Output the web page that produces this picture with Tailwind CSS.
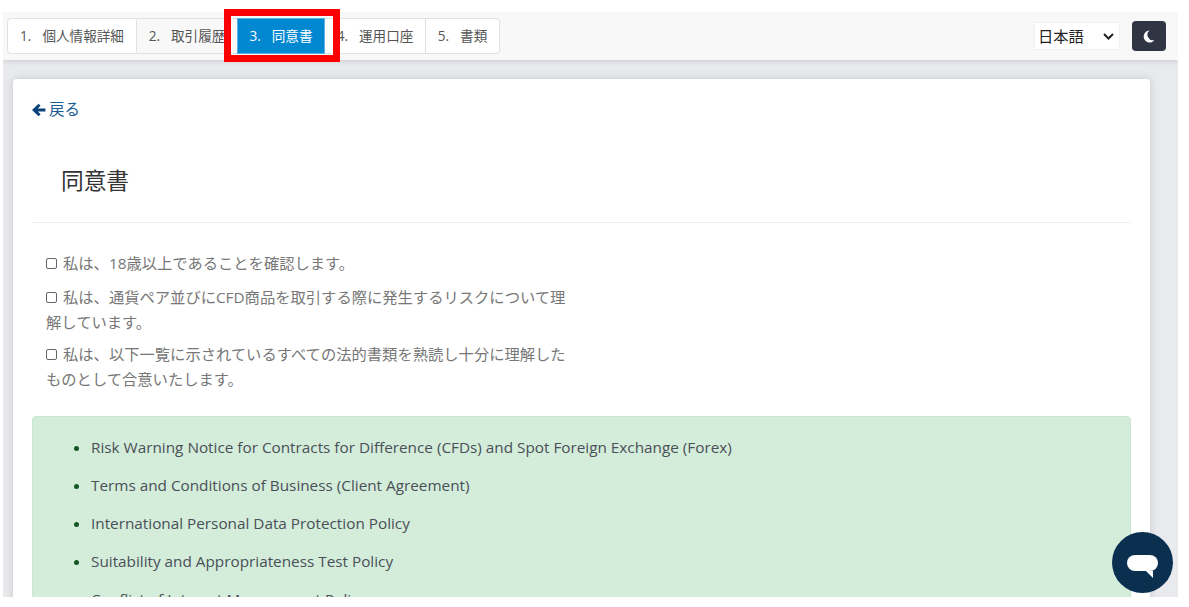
<!DOCTYPE html>
<html lang="ja">
<head>
    <meta charset="utf-8">
    <title>同意書</title>
    <script src="https://cdn.jsdelivr.net/npm/@tailwindcss/browser@4"></script>
</head>
<body class="relative h-[607px] overflow-hidden bg-white pt-[12px] pl-[3px] pr-[11px] pb-[10px] font-['Open_Sans','Noto_Sans_CJK_JP',sans-serif]">
    <div class="h-full flex flex-col overflow-hidden bg-[#e9eaee]">
        <nav class="h-[48px] shrink-0 flex items-center justify-between bg-[#f8f8f8] pl-[4px] pr-[12px] shadow-[0_2px_4px_rgba(0,0,0,0.1)]">
            <ul class="flex h-[36px] text-[13.6px] text-[#555]">
                <li class="w-[130px] flex items-center justify-center bg-white border border-[#dee2e6] rounded-l-[4px] gap-[11px]"><span>1.</span><span>個人情報詳細</span></li>
                <li class="w-[100px] flex items-center justify-center bg-[#f8f8f8] border-y border-[#dee2e6] gap-[11px]"><span>2.</span><span>取引履歴</span></li>
                <li class="w-[88px] flex items-center justify-center bg-[#0288d1] border border-[#5fb3e0] text-white gap-[11px]"><span>3.</span><span>同意書</span></li>
                <li class="w-[101px] flex items-center justify-center bg-white border-y border-r border-[#dee2e6] gap-[11px]"><span>4.</span><span>運用口座</span></li>
                <li class="w-[74px] flex items-center justify-center bg-white border-y border-r border-[#dee2e6] rounded-r-[4px] gap-[11px]"><span>5.</span><span>書類</span></li>
            </ul>
            <div class="flex items-center gap-[12px]">
                <div class="relative w-[86px] h-[28px]">
                    <select class="w-full h-full appearance-none bg-white border border-[#f0f0f0] text-[15.3px] text-[#222] pl-[3px]">
                        <option>日本語</option>
                    </select>
                    <svg class="absolute right-[6px] top-[11px] w-[11px] h-[7px] pointer-events-none" viewBox="0 0 11 7" fill="none" stroke="#222" stroke-width="2"><path d="M1 1L5.500 5.500L10 1"/></svg>
                </div>
                <button class="w-[34px] h-[30px] flex items-center justify-center rounded-[4px] bg-[#2f3542]">
                    <svg class="w-[13px] h-[13px] -ml-[1px]" viewBox="0 0 24 24" fill="#fff"><path d="M14 1A11 11 0 1 0 23 18.500 A10 10 0 0 1 14 1Z"/></svg>
                </button>
            </div>
        </nav>
        <main class="flex-1 min-h-0 pt-[19px] pl-[10px] pr-[28px]">
            <div class="h-[600px] bg-white rounded-[4px] shadow-[0_0_8px_rgba(0,0,0,0.15)] px-[19px] pt-[19px]">
                <a class="flex items-center gap-[3px] h-[24px] text-[15.500px] text-[#1d5c96]">
                    <svg class="w-[14px] h-[14px]" viewBox="0 0 24 24" fill="none" stroke="#0b3f7a" stroke-width="5"><path d="M23 12H4M13 3L3.500 12L13 21"/></svg>
                    <span>戻る</span>
                </a>
                <h2 class="mt-[44px] pl-[29px] text-[22.700px] leading-[30px] text-[#333]">同意書</h2>
                <hr class="mt-[26px] border-[#f0f0f0]">
                <div class="mt-[28px] pl-[14px] w-[544px] text-[15.3px] leading-[25px] text-[#777]">
                    <p><input type="checkbox" class="w-[11px] h-[11px] mr-[6px] appearance-none border border-[#666] rounded-[2px]">私は、18歳以上であることを確認します。</p>
                    <p class="mt-[9px]"><input type="checkbox" class="w-[11px] h-[11px] mr-[6px] appearance-none border border-[#666] rounded-[2px]">私は、通貨ペア並びにCFD商品を取引する際に発生するリスクについて理解しています。</p>
                    <p class="mt-[7px]"><input type="checkbox" class="w-[11px] h-[11px] mr-[6px] appearance-none border border-[#666] rounded-[2px]">私は、以下一覧に示されているすべての法的書類を熟読し十分に理解したものとして合意いたします。</p>
                </div>
                <div class="mt-[24px] rounded-[4px] border border-[#c9e6d0] bg-[#d4ecda] pt-[11px] pl-[58px] text-[15.3px] leading-[38.1px] text-[#495057]">
                    <ul class="list-disc marker:text-[#155724]">
                        <li>Risk Warning Notice for Contracts for Difference (CFDs) and Spot Foreign Exchange (Forex)</li>
                        <li>Terms and Conditions of Business (Client Agreement)</li>
                        <li>International Personal Data Protection Policy</li>
                        <li>Suitability and Appropriateness Test Policy</li>
                        <li>Conflict of Interest Management Policy</li>
                    </ul>
                </div>
            </div>
        </main>
    </div>
    <div class="absolute left-[224px] top-[9px] w-[116px] h-[53px] border-[7px] border-[#ff0000]"></div>
    <button class="absolute left-[1112px] top-[532px] w-[61px] h-[61px] rounded-full bg-[#0a2f4f] flex items-center justify-center">
        <span class="relative block w-[31px] h-[16px] rounded-full bg-white">
            <svg class="absolute left-[19px] top-[16px] w-[7px] h-[7px]" viewBox="0 0 7 7" fill="#fff"><path d="M0 0H7V7Z"/></svg>
        </span>
    </button>
</body>
</html>
